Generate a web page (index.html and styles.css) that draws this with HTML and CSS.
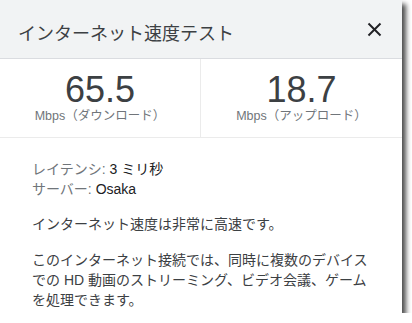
FILE: index.html
```html
<!DOCTYPE html>
<html>
<head>
  <link rel="stylesheet" href="styles.css">
</head>
<body>
  <div class="speed-card">
    <div class="card-header">
      <div class="card-title">インターネット速度テスト</div>
      <div class="close-btn">
        <svg width="15" height="15" viewBox="0 0 15 15">
          <line x1="1.5" y1="1.5" x2="13.5" y2="13.5" stroke="#202124" stroke-width="2"/>
          <line x1="13.5" y1="1.5" x2="1.5" y2="13.5" stroke="#202124" stroke-width="2"/>
        </svg>
      </div>
    </div>

    <div class="stats">
      <div class="stat">
        <div class="stat-value">65.5</div>
        <div class="stat-label">Mbps（ダウンロード）</div>
      </div>
      <div class="stat">
        <div class="stat-value">18.7</div>
        <div class="stat-label">Mbps（アップロード）</div>
      </div>
    </div>

    <div class="details">
      <div class="meta">
        <div><span class="meta-key">レイテンシ:</span> 3 ミリ秒</div>
        <div><span class="meta-key">サーバー:</span> Osaka</div>
      </div>
      <p class="summary">インターネット速度は非常に高速です。</p>
      <p class="summary">このインターネット接続では、同時に複数のデバイスでの HD 動画のストリーミング、ビデオ会議、ゲームを処理できます。</p>
    </div>
  </div>
</body>
</html>
```

FILE: styles.css
```css
body {
  margin: 0;
  background: #ffffff;
  font-family: 'Liberation Sans', 'Noto Sans CJK JP', sans-serif;
}

.speed-card {
  width: 402px;
  height: 313px;
  background: #fff;
  box-shadow: 4px 4px 5px rgba(0, 0, 0, 0.7);
  overflow: hidden;
}

.card-header {
  display: flex;
  justify-content: space-between;
  height: 58px;
  padding: 0 20px 0 18px;
  background: #f1f3f4;
  border-bottom: 1px solid #dadce0;
}

.card-title {
  margin-top: 23px;
  font-size: 18px;
  line-height: 22px;
  color: #3c4043;
}

.close-btn {
  margin-top: 22px;
  height: 15px;
}

.stats {
  display: grid;
  grid-template-columns: 201px 1fr;
  border-bottom: 1px solid #ebebeb;
}

.stat {
  display: flex;
  flex-direction: column;
  align-items: center;
  padding: 13px 0 13px;
}

.stat:first-child {
  border-right: 1px solid #ebebeb;
}

.stat-value {
  font-size: 36px;
  line-height: 36px;
  color: #3c4043;
}

.stat-label {
  font-size: 12.5px;
  line-height: 16px;
  color: #70757a;
}

.details {
  padding: 21px 32px 0;
  font-size: 14px;
  line-height: 20px;
  color: #202124;
}

.meta-key {
  color: #70757a;
}

.summary {
  margin: 15px 0 0;
  color: #3c4043;
}

.summary + .summary {
  margin-top: 16px;
}
```
